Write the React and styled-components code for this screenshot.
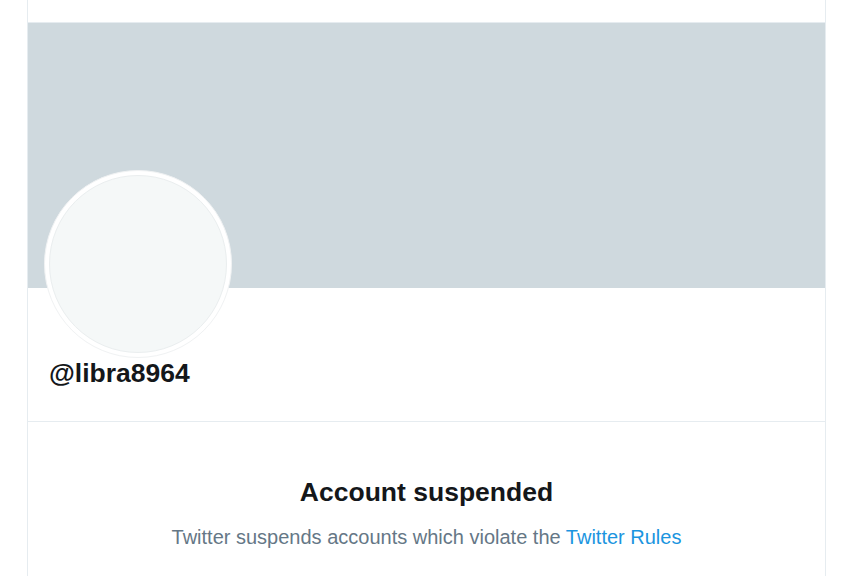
import React from 'react';
import styled, { createGlobalStyle } from 'styled-components';

const GlobalStyle = createGlobalStyle`
	html, body {
		margin: 0;
		padding: 0;
		background: #fff;
		font-family: "Liberation Sans", Arial, sans-serif;
	}
`;

export default function App() {
	return (
		<Page>
			<GlobalStyle />
			<Column>
				<TopBar />
				<Banner />
				<ProfileInfo>
					<Avatar>
						<AvatarInner />
					</Avatar>
					<Handle>@libra8964</Handle>
				</ProfileInfo>
				<Notice>
					<NoticeTitle>Account suspended</NoticeTitle>
					<NoticeText>
						Twitter suspends accounts which violate the <RulesLink href="#">Twitter Rules</RulesLink>
					</NoticeText>
				</Notice>
			</Column>
		</Page>
	);
}

const Page = styled.div`
	width: 848px;
	height: 576px;
	overflow: hidden;
	padding-left: 27px;
	box-sizing: border-box;
`;

const Column = styled.div`
	width: 799px;
	min-height: 576px;
	box-sizing: border-box;
	border-left: 1px solid #e6ecf0;
	border-right: 1px solid #e6ecf0;
	display: flex;
	flex-direction: column;
`;

const TopBar = styled.div`
	height: 22px;
	border-bottom: 1px solid #e6ecf0;
`;

const Banner = styled.div`
	height: 265px;
	background-color: #cfd9de;
`;

const ProfileInfo = styled.div`
	padding: 0 16px 0;
	height: 133px;
	border-bottom: 1px solid #e6ecf0;
	display: flex;
	flex-direction: column;
`;

const Avatar = styled.div`
	width: 188px;
	height: 188px;
	margin-top: -118px;
	box-sizing: border-box;
	border-radius: 50%;
	background: #fff;
	padding: 4px;
	border: 1px solid #f0f2f3;
`;

const AvatarInner = styled.div`
	width: 100%;
	height: 100%;
	box-sizing: border-box;
	border-radius: 50%;
	background: #f5f8f8;
	border: 1px solid #eaeeef;
`;

const Handle = styled.div`
	margin: 0 0 0 5px;
	font-size: 26.5px;
	font-weight: 700;
	line-height: 30px;
	color: #14171a;
`;

const Notice = styled.div`
	display: flex;
	flex-direction: column;
	align-items: center;
	padding-top: 54px;
`;

const NoticeTitle = styled.h2`
	margin: 0;
	font-size: 26.5px;
	font-weight: 700;
	line-height: 32px;
	color: #14171a;
`;

const NoticeText = styled.p`
	margin: 17px 0 0;
	font-size: 20px;
	line-height: 24px;
	color: #657786;
`;

const RulesLink = styled.a`
	color: #1b95e0;
	text-decoration: none;
`;
